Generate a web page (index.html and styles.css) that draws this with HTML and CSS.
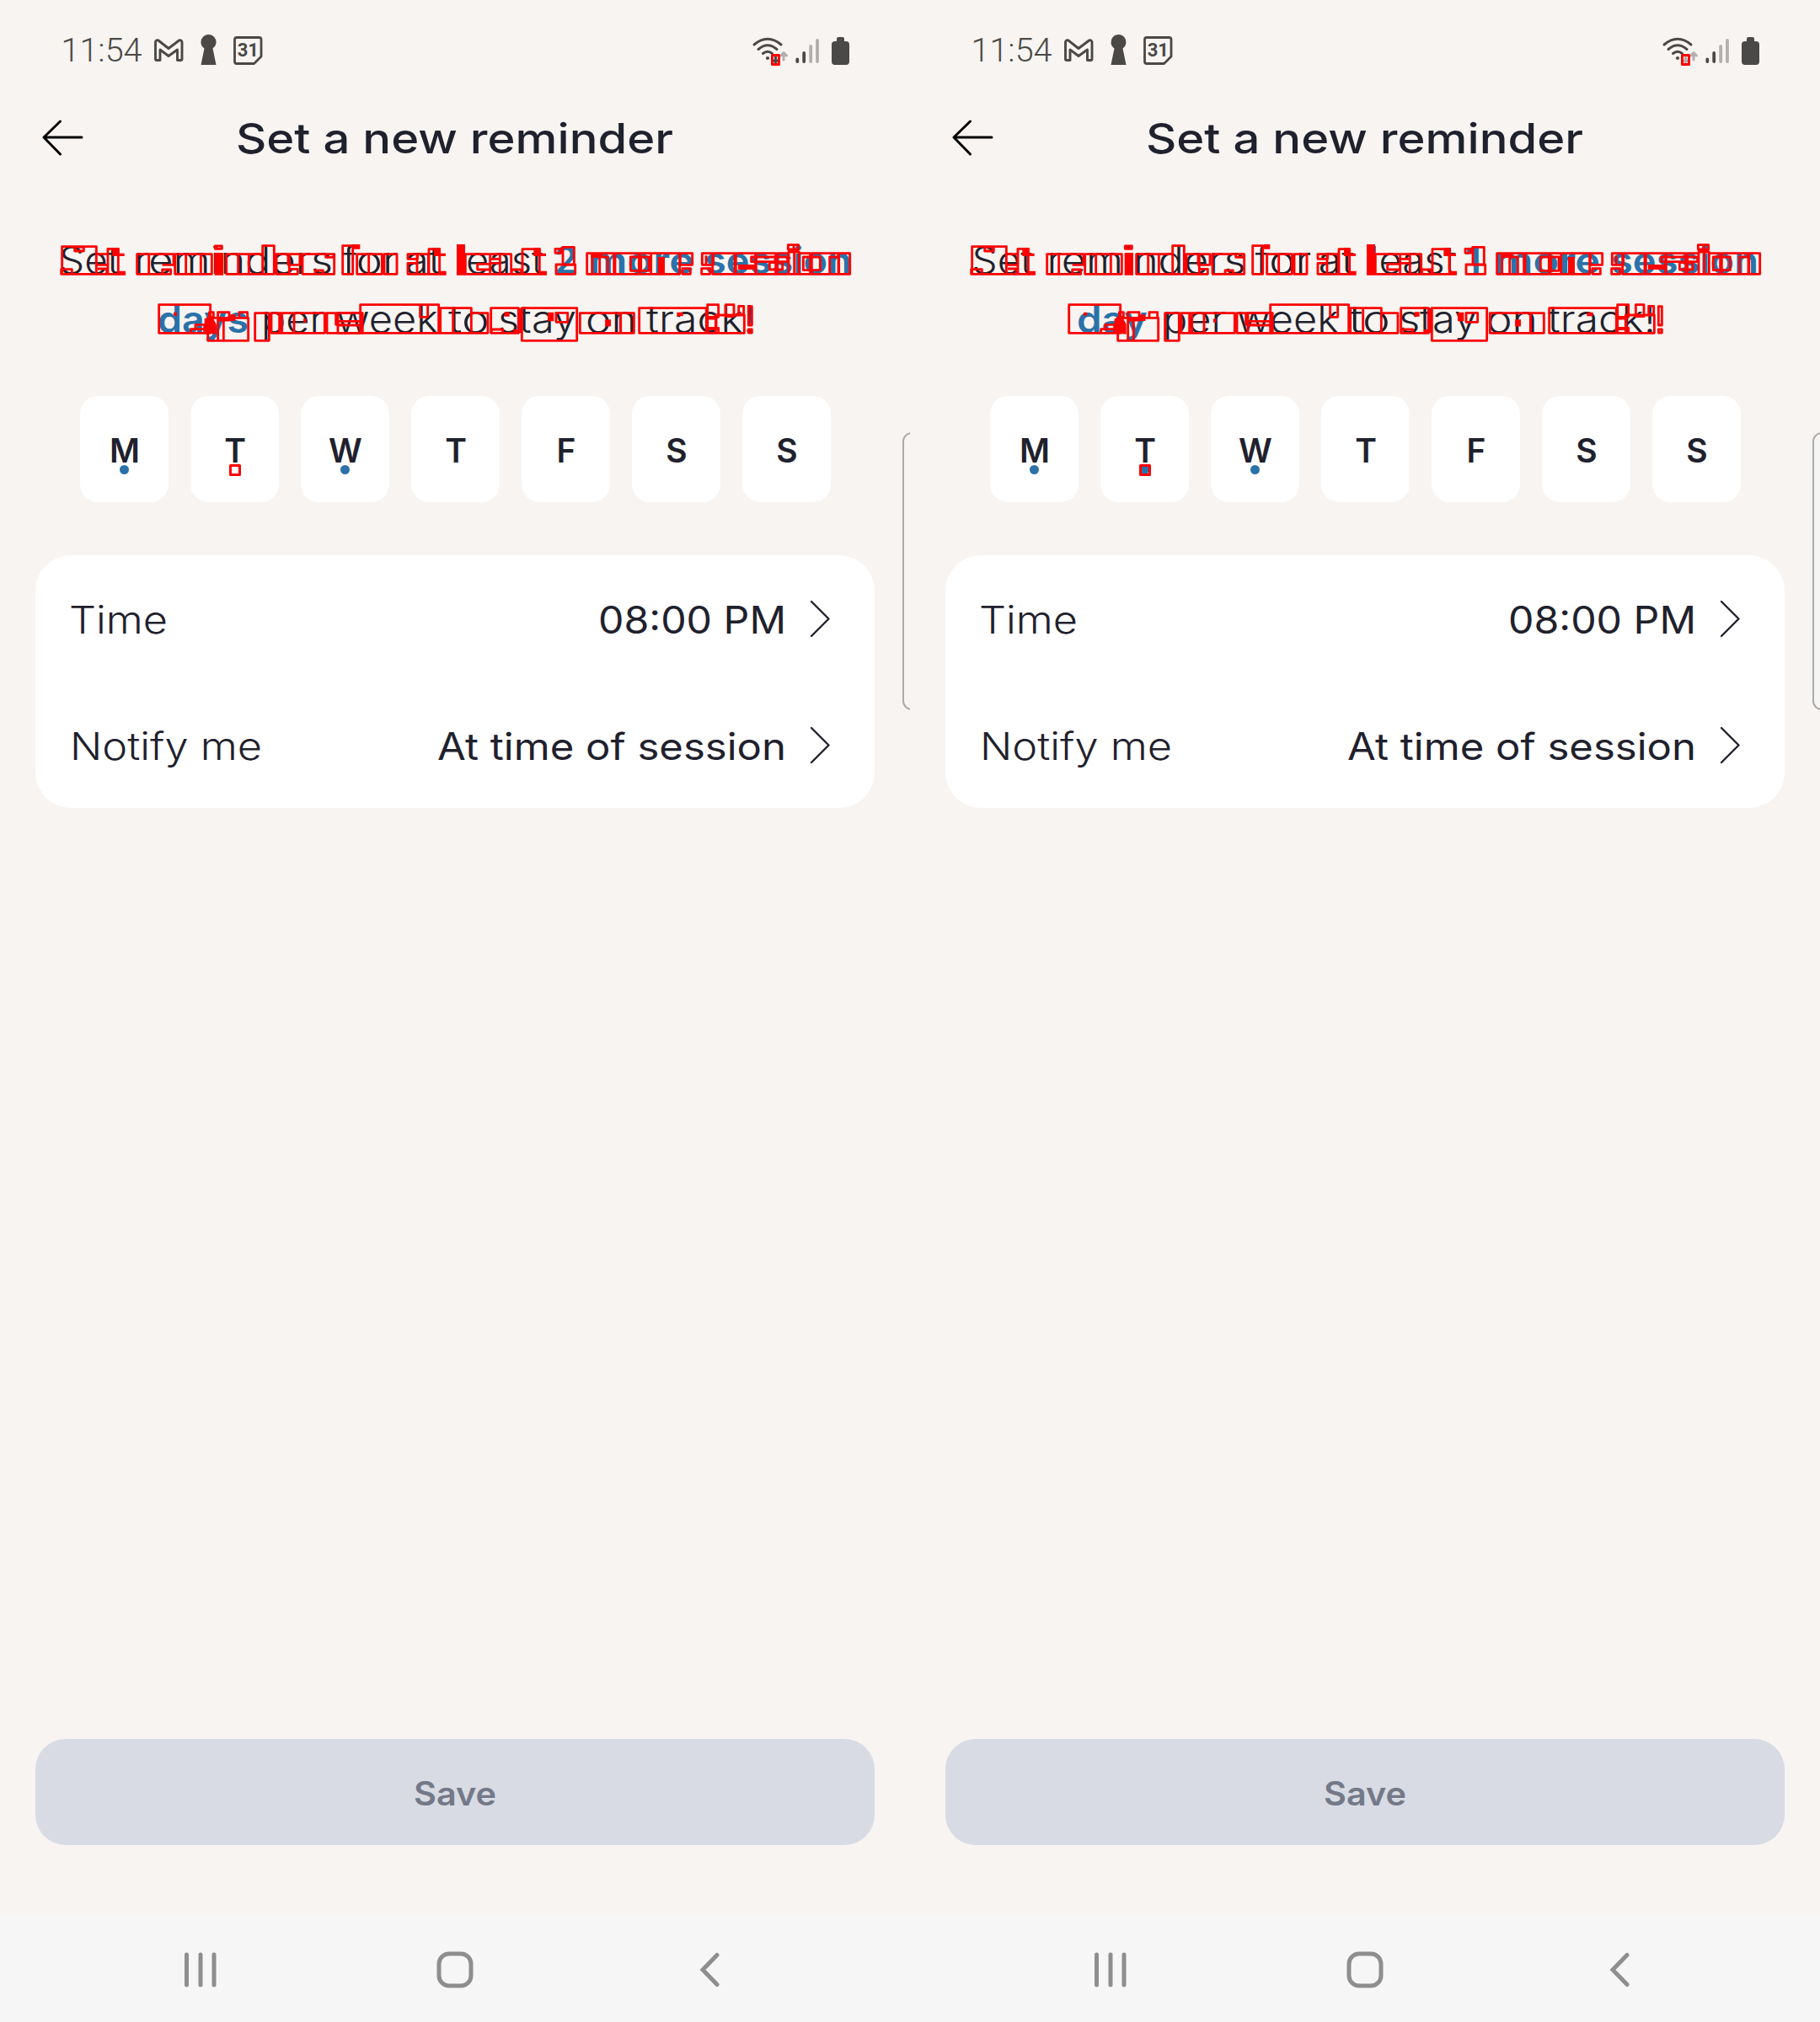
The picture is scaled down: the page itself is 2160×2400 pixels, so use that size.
FILE: index.html
```html
<!DOCTYPE html>
<html lang="en">
<head>
<meta charset="utf-8">
<title>Set a new reminder</title>
<link rel="stylesheet" href="styles.css">
</head>
<body>
<svg class="defs" width="0" height="0">
  <defs>
    <g id="status-icons" fill="none" stroke="#4a4947" stroke-linecap="round" stroke-linejoin="round">
      <path stroke-width="2.9" d="M184.500 70.500V50Q185 47 188 48L200 57.500L212.500 48Q215.500 47 216 50V70Q216 71.500 214.500 71.500H210.500V59L200 66.500L190 59V71.500H186Q184.500 71.500 184.500 70"/>
      <path fill="#4a4947" stroke="none" d="M242.500 57.500A9 9 0 1 1 252.500 57.500L256.500 77H238.500Z"/>
      <path stroke-width="2.8" d="M281 44.500H307.500Q310 44.500 310 47V67L301.500 75.500H281Q278.500 75.500 278.500 73V47Q278.500 44.500 281 44.500Z"/>
      <path stroke-width="3" d="M895 53Q911 39.500 927 53M900 58.500Q911 49 922 58.500M905.500 63.500Q911 59 916.500 63.500"/>
      <circle cx="911" cy="69" r="2.1" fill="#4a4947" stroke="none"/>
      <path stroke="#b2b0ae" stroke-width="3" d="M930 71V63M926.500 66L930 62.500L933.500 66"/>
      <path stroke-width="3.800" d="M946.300 70.500V73M954.200 63V73"/>
      <path stroke="#b2b0ae" stroke-width="3.800" d="M962.200 55V73M970 48V73"/>
      <path fill="#4a4947" stroke="none" d="M995 44H1000Q1002 44 1002 46V49H1004Q1008 49 1008 53V73Q1008 77 1004 77H991Q987 77 987 73V53Q987 49 991 49H993V46Q993 44 995 44Z"/>
    </g>
    <g id="diff-marks" fill="none" stroke="#f00" stroke-linejoin="round">
      <g transform="translate(60 270) scale(.33333)" stroke-width="8.500">
        <path d="M41 68H163V166H41ZM86 70H118V84H86ZM38 149H76V166H38ZM163 95H204V133H163ZM168 147H200V166H163V95M204 76H241V166H204Z"/>
        <path d="M308 95H350V166H308ZM350 95H438V133H398M350 166H398V150H428V166ZM443 95H482V166H443ZM482 95H535V166H482ZM535 95H574V166H535ZM586 66H610V76H586ZM626 95H668V166H626ZM668 95H706V166H668ZM706 95H755V166H706ZM755 65H796V166H755ZM804 95H850V166H804ZM846 95H888V133H846ZM850 148H880V166H850ZM897 95H1010V166H897ZM980 95H1008V106H980ZM942 153H970V166H942Z"/>
        <path d="M386 275H569V376H386ZM500 362H548V376H500ZM516 346H548V362H516ZM560 322H704V403H560ZM596 322H616V403H596ZM565 302H580V320H565ZM596 302H636V330H596ZM672 302H701V322H672ZM728 305H778V403H728ZM786 305H976V376H786ZM815 305V376M824 305V376M867 305V376M984 305H1110V376H984ZM1016 305V346H1050"/>
        <path fill="#f00" stroke="none" d="M220 73H245V92H263V102H220ZM240 155H267V170H240ZM584 90H615V170H584ZM438 302H450V314H438ZM548 325L575 316L590 345V380L548 376ZM636 310H658V333H636ZM900 325H911V338H900Z"/>
      </g>
      <g transform="translate(400 270) scale(.33333)" stroke-width="8.500">
        <path d="M20 65H56V166H20ZM71 95H160V166H71ZM113 95V166M168 95H213V166H168ZM252 95H287V112H252ZM252 127H285V166H252ZM285 95H325V166H285ZM327 77H365V166H327ZM457 95H545V166H457ZM500 130H545V150H500ZM545 95H580V112H545ZM545 127H580V166H545ZM580 95H620V166H580ZM622 150H656V166H622ZM660 77H721V166H660ZM777 76H796V91H777ZM804 70H844V133H804ZM780 132H848V166H780Z"/>
        <path d="M3 305H90V376H3ZM0 334H90M0 348H90M83 275H362V376H83ZM296 275H323V319H296ZM368 287H478V376H368ZM413 287V376M478 305H537V376H478ZM548 287H646V376H548ZM550 363H590V376H550ZM658 287H854V403H658ZM780 304H821V337H780ZM865 305H1057V376H865ZM1009 305V376"/>
        <path fill="#f00" stroke="none" d="M60 60H82V77H60ZM345 73H368V92H387V102H345ZM365 155H389V170H365ZM426 60H456V170H426ZM700 73H725V92H744V102H700ZM722 155H747V170H722ZM596 301H614V317H596ZM628 363H660V376H628ZM644 287H658V376H644ZM750 302H772V334H750ZM955 330H972V352H955Z"/>
      </g>
      <g transform="translate(700 270) scale(.33333)" stroke-width="8.500">
        <path d="M-10 92H86V166H-10ZM8 95V166M35 105H64V166H35ZM90 92H175V166H90ZM145 105H178V154H145ZM178 92H320V166H178ZM182 105H210V154H182ZM218 92V166M322 92H365V133H322ZM330 146H358V166H330ZM400 92H440V133H400ZM398 146H428V166H398ZM414 100V130M437 92H520V166H437ZM516 92H590V166H516ZM592 92H662V166H592ZM575 105H704V122H575ZM640 125H686V150H640ZM668 92H708V166H668ZM706 62H743V78H706ZM726 62V78M708 87H745V166H708ZM728 87V166M745 92H785V166H745ZM760 105H820V152H760ZM790 92H885V166H790ZM854 105H885V166H854ZM887 92H926V166H887Z"/>
        <path d="M110 305V376M176 287H415V376H176ZM419 275H458V319H419ZM419 324H450V362H419ZM419 358H458V376H419ZM448 312H550V376H448ZM484 275H513V317H484ZM530 280H548V309H530ZM565 281H577V348H565ZM565 363H577V375H565Z"/>
        <path fill="#f00" stroke="none" d="M4 90H45V108H4ZM243 105H267V168H243ZM528 132H590V150H528ZM55 328H75V352H55ZM310 302H332V316H310Z"/>
      </g>
      <path stroke-width="3" d="M916.500 65.500H924.500V76.500H916.500ZM273.500 552.500H284.500V563.500H273.500Z"/>
    </g>
  </defs>
</svg>

<main class="screen">
  <header class="status"><svg width="1080" height="100">
    <text class="clock" x="72.500" y="73" textLength="96" lengthAdjust="spacingAndGlyphs">11:54</text>
    <use href="#status-icons"/>
    <text class="date" x="294.300" y="67">31</text>
    <path class="down" d="M920.500 67V74M918 71L920.500 74L923 71"/>
  </svg></header>
  <section class="title"><svg width="1080" height="128">
    <path class="back" d="M97 63H52M71.500 44L52 63L71.500 83"/>
    <text class="heading" x="280" y="81.500" textLength="519" lengthAdjust="spacingAndGlyphs">Set a new reminder</text>
  </svg></section>
  <section class="message"><svg width="1080" height="242">
    <g class="light">
      <text x="70" y="97" textLength="72" lengthAdjust="spacingAndGlyphs">Set</text>
      <text x="159" y="97" textLength="236" lengthAdjust="spacingAndGlyphs">reminders</text>
      <text x="406" y="97" textLength="67" lengthAdjust="spacingAndGlyphs">for</text>
      <text x="481" y="97" textLength="43" lengthAdjust="spacingAndGlyphs">at</text>
      <text x="542" y="97" textLength="103" lengthAdjust="spacingAndGlyphs">least</text>
      <text class="accent" x="658" y="97" textLength="27" lengthAdjust="spacingAndGlyphs">2</text>
      <text class="accent" x="699" y="97" textLength="125" lengthAdjust="spacingAndGlyphs">more</text>
      <text class="accent" x="836" y="97" textLength="175" lengthAdjust="spacingAndGlyphs">session</text>
      <text class="accent" x="187" y="167" textLength="108" lengthAdjust="spacingAndGlyphs">days</text>
      <text x="310" y="167" textLength="75" lengthAdjust="spacingAndGlyphs">per</text>
      <text x="399" y="167" textLength="121" lengthAdjust="spacingAndGlyphs">week</text>
      <text x="532" y="167" textLength="49" lengthAdjust="spacingAndGlyphs">to</text>
      <text x="591" y="167" textLength="93" lengthAdjust="spacingAndGlyphs">stay</text>
      <text x="695" y="167" textLength="61" lengthAdjust="spacingAndGlyphs">on</text>
      <text x="767" y="167" textLength="129" lengthAdjust="spacingAndGlyphs">track!</text>
    </g>
  </svg></section>
  <section class="days">
    <div class="day dot">M</div><div class="day">T</div><div class="day dot">W</div><div class="day">T</div><div class="day">F</div><div class="day">S</div><div class="day">S</div>
  </section>
  <section class="options">
    <div class="option"><svg width="996" height="150">
      <text class="light" x="40" y="93" textLength="117" lengthAdjust="spacingAndGlyphs">Time</text>
      <text class="value" x="668" y="93" textLength="223" lengthAdjust="spacingAndGlyphs">08:00 PM</text>
      <path class="chevron" d="M921 55L941.500 75.500L921 96"/>
    </svg></div>
    <div class="option"><svg width="996" height="150">
      <text class="light" x="41" y="93" textLength="228" lengthAdjust="spacingAndGlyphs">Notify me</text>
      <text class="value" x="477" y="93" textLength="414" lengthAdjust="spacingAndGlyphs">At time of session</text>
      <path class="chevron" d="M921 55L941.500 75.500L921 96"/>
    </svg></div>
  </section>
  <div class="spacer"></div>
  <button class="save"><svg width="996" height="126"><text x="449" y="79" textLength="98" lengthAdjust="spacingAndGlyphs">Save</text></svg></button>
  <nav class="nav"><svg width="1080" height="126">
    <path d="M221.500 46V82M238 46V82M254 46V82M851 46.500L834 64L851 81.500"/><rect x="521" y="45" width="38" height="38" rx="12"/>
  </svg></nav>
  <div class="edge"></div>
  <svg class="marks" width="1080" height="600"><use href="#diff-marks"/></svg>
</main>

<main class="screen">
  <header class="status"><svg width="1080" height="100">
    <text class="clock" x="72.500" y="73" textLength="96" lengthAdjust="spacingAndGlyphs">11:54</text>
    <use href="#status-icons"/>
    <text class="date" x="294.300" y="67">31</text>
    <path class="down idle" d="M920.500 67V74M918 71L920.500 74L923 71"/>
  </svg></header>
  <section class="title"><svg width="1080" height="128">
    <path class="back" d="M97 63H52M71.500 44L52 63L71.500 83"/>
    <text class="heading" x="280" y="81.500" textLength="519" lengthAdjust="spacingAndGlyphs">Set a new reminder</text>
  </svg></section>
  <section class="message"><svg width="1080" height="242">
    <g class="light">
      <text x="73.500" y="97" textLength="72" lengthAdjust="spacingAndGlyphs">Set</text>
      <text x="162.500" y="97" textLength="236" lengthAdjust="spacingAndGlyphs">reminders</text>
      <text x="409.500" y="97" textLength="67" lengthAdjust="spacingAndGlyphs">for</text>
      <text x="484.500" y="97" textLength="43" lengthAdjust="spacingAndGlyphs">at</text>
      <text x="545.500" y="97" textLength="103" lengthAdjust="spacingAndGlyphs">least</text>
      <text class="accent" x="659" y="97" textLength="19" lengthAdjust="spacingAndGlyphs">1</text>
      <text class="accent" x="694" y="97" textLength="125" lengthAdjust="spacingAndGlyphs">more</text>
      <text class="accent" x="832" y="97" textLength="175" lengthAdjust="spacingAndGlyphs">session</text>
      <text class="accent" x="198" y="167" textLength="84" lengthAdjust="spacingAndGlyphs">day</text>
      <text x="300" y="167" textLength="75" lengthAdjust="spacingAndGlyphs">per</text>
      <text x="388" y="167" textLength="121" lengthAdjust="spacingAndGlyphs">week</text>
      <text x="521" y="167" textLength="49" lengthAdjust="spacingAndGlyphs">to</text>
      <text x="580" y="167" textLength="93" lengthAdjust="spacingAndGlyphs">stay</text>
      <text x="684" y="167" textLength="61" lengthAdjust="spacingAndGlyphs">on</text>
      <text x="757" y="167" textLength="128" lengthAdjust="spacingAndGlyphs">track!</text>
    </g>
  </svg></section>
  <section class="days">
    <div class="day dot">M</div><div class="day dot">T</div><div class="day dot">W</div><div class="day">T</div><div class="day">F</div><div class="day">S</div><div class="day">S</div>
  </section>
  <section class="options">
    <div class="option"><svg width="996" height="150">
      <text class="light" x="40" y="93" textLength="117" lengthAdjust="spacingAndGlyphs">Time</text>
      <text class="value" x="668" y="93" textLength="223" lengthAdjust="spacingAndGlyphs">08:00 PM</text>
      <path class="chevron" d="M921 55L941.500 75.500L921 96"/>
    </svg></div>
    <div class="option"><svg width="996" height="150">
      <text class="light" x="41" y="93" textLength="228" lengthAdjust="spacingAndGlyphs">Notify me</text>
      <text class="value" x="477" y="93" textLength="414" lengthAdjust="spacingAndGlyphs">At time of session</text>
      <path class="chevron" d="M921 55L941.500 75.500L921 96"/>
    </svg></div>
  </section>
  <div class="spacer"></div>
  <button class="save"><svg width="996" height="126"><text x="449" y="79" textLength="98" lengthAdjust="spacingAndGlyphs">Save</text></svg></button>
  <nav class="nav"><svg width="1080" height="126">
    <path d="M221.500 46V82M238 46V82M254 46V82M851 46.500L834 64L851 81.500"/><rect x="521" y="45" width="38" height="38" rx="12"/>
  </svg></nav>
  <div class="edge"></div>
  <svg class="marks" width="1080" height="600"><use href="#diff-marks"/></svg>
</main>
</body>
</html>
```
FILE: styles.css
```css
* { box-sizing: border-box; }
body {
  margin: 0;
  display: flex;
  width: 2160px;
  height: 2400px;
  background: #f7f4f1;
  font-family: Inter, "Open Sans", sans-serif;
  color: #1f212d;
}
svg { display: block; }
.defs { position: absolute; }
.screen {
  position: relative;
  display: flex;
  flex-direction: column;
  width: 1080px;
  height: 2400px;
  overflow: hidden;
}
.status { height: 100px; }
.title { height: 128px; }
.message { height: 242px; }
.clock { font: 350 39px Roboto, sans-serif; fill: #4a4947; }
.date { font: 700 22px Roboto, sans-serif; fill: #4a4947; text-anchor: middle; }
.down { fill: none; stroke: #4a4947; stroke-width: 3; }
.idle { stroke: #b2b0ae; }
.back { fill: none; stroke: #000; stroke-width: 3; stroke-linecap: round; stroke-linejoin: round; }
.heading { font-size: 50px; font-weight: 550; fill: #1f212d; }
.light { font-size: 44.5px; font-weight: 300; fill: #1f212d; }
.accent { font-weight: 600; fill: #2a72a9; }
.value { font-size: 44.5px; font-weight: 400; fill: #1f212d; }
.days { display: flex; gap: 26px; padding: 0 94px 0 95px; }
.day {
  display: flex;
  align-items: center;
  justify-content: center;
  position: relative;
  width: 105px;
  height: 126px;
  padding: 2px 0 0 1px;
  border-radius: 21px;
  background: #fff;
  font-size: 39px;
  font-weight: 600;
}
.dot::after {
  content: "";
  position: absolute;
  left: 47px;
  top: 82px;
  width: 11px;
  height: 11px;
  border-radius: 50%;
  background: #2a72a9;
}
.options { margin: 63px 42px 0; border-radius: 42px; background: #fff; }
.option { height: 150px; }
.chevron { fill: none; stroke: #1f212d; stroke-width: 2.4; stroke-linecap: round; stroke-linejoin: round; }
.spacer { flex: 1; }
.save {
  height: 126px;
  margin: 0 42px 84px;
  padding: 0;
  border: 0;
  border-radius: 36px;
  background: #d8dbe3;
  font-family: inherit;
}
.save text { font-size: 39px; font-weight: 600; fill: #747988; }
.nav { height: 126px; background: #f6f6f6; }
.nav svg { fill: none; stroke: #8e8e8e; stroke-width: 5; stroke-linecap: round; }
.edge {
  position: absolute;
  left: 1071px;
  top: 513px;
  width: 22px;
  height: 330px;
  border: 2px solid #acaba9;
  border-radius: 13px;
  background: #f7f5f4;
}
.marks { position: absolute; left: 0; top: 0; }
```
